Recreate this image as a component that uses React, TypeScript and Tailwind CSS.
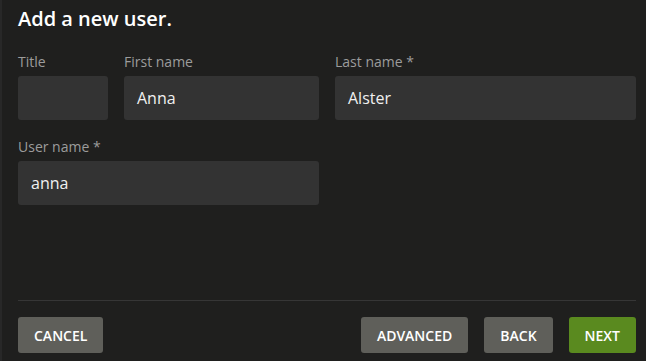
export default function App() {
  return (
    <div
      className="w-[646px] h-[361px] bg-[#1f1f1e] border-l-2 border-[#282828] flex flex-col overflow-hidden"
      style={{ fontFamily: '"Open Sans", sans-serif' }}
    >
      <div className="pl-4 pr-[10px] pt-[5px]">
        <h1 className="text-[20px] font-semibold text-white leading-[28px]">Add a new user.</h1>
      </div>

      <div className="pl-4 pr-[10px] pt-[19px] flex flex-col gap-[17px]">
        <div className="flex gap-4">
          <Field label="Title" value="" width="w-[90px]" />
          <Field label="First name" value="Anna" width="w-[195px]" />
          <Field label="Last name *" value="Alster" width="w-[301px]" />
        </div>
        <div className="flex">
          <Field label="User name *" value="anna" width="w-[301px]" />
        </div>
      </div>

      <div className="flex-1" />

      <div className="ml-4 mr-[10px] border-t border-[#363636]" />

      <div className="pl-4 pr-[10px] pt-4 pb-[8px] flex items-center">
        <Btn>Cancel</Btn>
        <div className="flex-1" />
        <div className="flex gap-4">
          <Btn>Advanced</Btn>
          <Btn>Back</Btn>
          <Btn green>Next</Btn>
        </div>
      </div>
    </div>
  );
}

function Field({ label, value, width }: { label: string; value: string; width: string }) {
  return (
    <div className={`flex flex-col shrink-0 ${width}`}>
      <label className="text-[14px] text-[#9c9c9c] leading-[19px] mb-[5px]">{label}</label>
      <div className="h-[44px] rounded-[3px] bg-[#333333] px-[13px] flex items-center text-[16px] text-[#f0f0f0]">
        {value}
      </div>
    </div>
  );
}

function Btn({ children, green }: { children: React.ReactNode; green?: boolean }) {
  return (
    <button
      className={`h-[36px] px-4 rounded-[3px] text-[14px] font-semibold uppercase text-white ${
        green ? "bg-[#5a8a1f]" : "bg-[#5f5f5a]"
      }`}
    >
      {children}
    </button>
  );
}
